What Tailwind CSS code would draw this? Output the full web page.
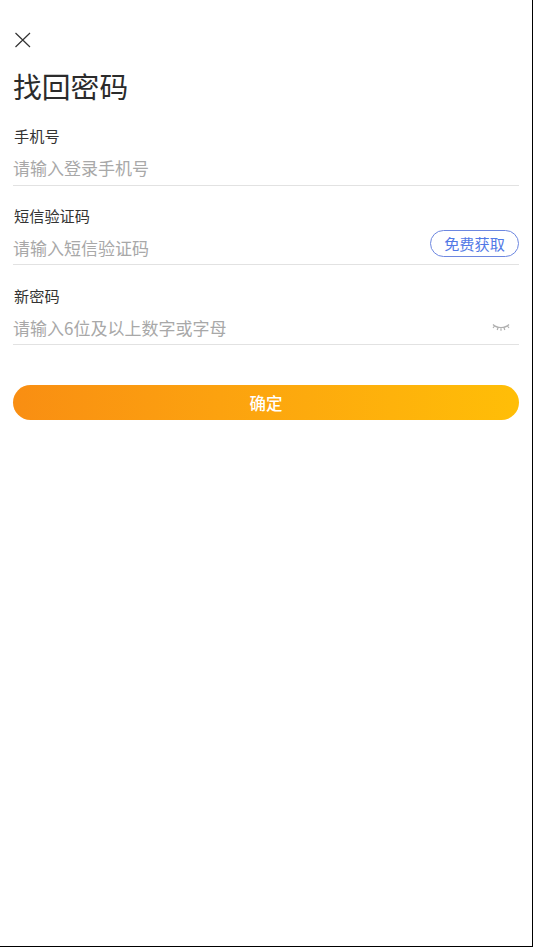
<!DOCTYPE html>
<html lang="zh-CN">
<head>
    <meta charset="UTF-8">
    <meta name="viewport" content="width=device-width, initial-scale=1.0">
    <title>找回密码</title>
    <script src="https://cdn.jsdelivr.net/npm/@tailwindcss/browser@4"></script>
</head>
<body class="bg-white">
    <div class="w-[533px] h-[947px] border-r border-b border-black overflow-hidden font-['Noto_Sans_CJK_SC','Noto_Sans',sans-serif] pl-[13px] pr-[13px]">
        <div class="pt-[32px] pl-[1px]">
            <svg class="block w-[17px] h-[16px]" viewBox="0 0 17 16" fill="none" stroke="#333333" stroke-width="1.2">
                <path d="M1.5 1 L16 15 M16 1 L1.5 15"/>
            </svg>
        </div>
        <h1 class="mt-[18px] text-[28.8px] leading-[40px] text-[#2b2b2b] font-normal">找回密码</h1>

        <div class="mt-[20px] h-[80px]">
            <div class="pl-[1px] text-[15.2px] leading-[18px] text-[#333333]">手机号</div>
            <div class="mt-[13px] h-[29px] flex items-center border-b border-[#e2e2e2] pb-[7px] text-[17px] text-[#a8a8a8]">请输入登录手机号</div>
        </div>

        <div class="h-[80px]">
            <div class="pl-[1px] text-[15.2px] leading-[18px] text-[#333333]">短信验证码</div>
            <div class="mt-[12px] h-[29px] flex items-center justify-between border-b border-[#e2e2e2] text-[17px] text-[#a8a8a8]">
                <span class="pb-[5px]">请输入短信验证码</span>
                <span class="w-[89px] h-[27px] -mt-[14px] flex items-center justify-center rounded-full border border-[#6d87e0] text-[15.2px] text-[#5279e6]">免费获取</span>
            </div>
        </div>

        <div class="h-[80px]">
            <div class="pl-[1px] text-[15.2px] leading-[18px] text-[#333333]">新密码</div>
            <div class="mt-[12px] h-[29px] flex items-center justify-between border-b border-[#e2e2e2] text-[17px] text-[#a8a8a8]">
                <span class="pb-[5px]">请输入6位及以上数字或字母</span>
                <svg class="block w-[18px] h-[9px] mr-[9px] mb-[5px]" viewBox="0 0 18 9" fill="none" stroke="#b0b0b0" stroke-width="1.2">
                    <path d="M1 1.5 C5 5.5 13 5.5 17 1.5 M2.5 3 L1 5 M6 4.8 L5.2 7 M9 5.2 L9 7.8 M12 4.8 L12.8 7 M15.5 3 L17 5"/>
                </svg>
            </div>
        </div>

        <button class="mt-[19px] w-[506px] h-[35px] pt-[1px] rounded-full bg-gradient-to-r from-[#f98e12] to-[#ffbe07] text-white text-[16.5px] font-medium flex items-center justify-center">确定</button>
    </div>
</body>
</html>
